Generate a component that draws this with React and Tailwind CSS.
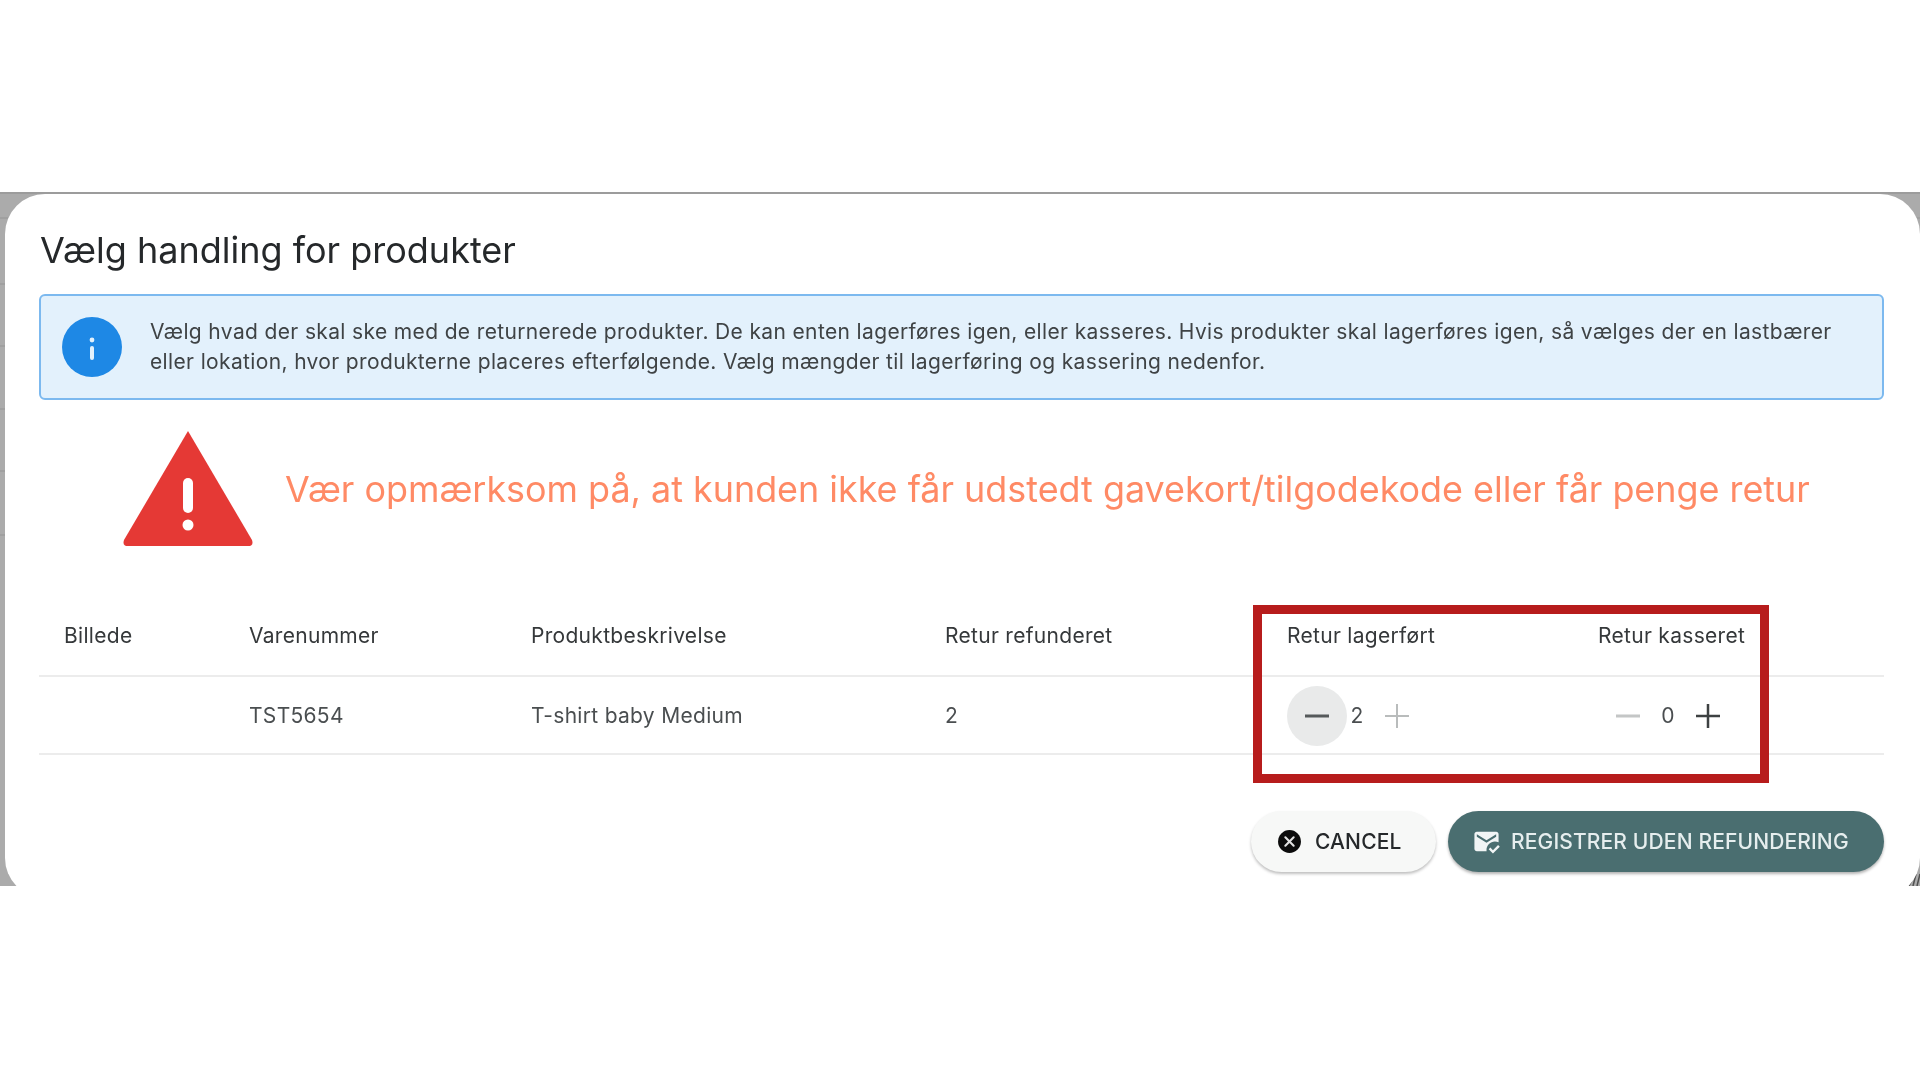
import React from 'react';

const rowGrid = 'grid grid-cols-[185px_282px_414px_342px_311px_1fr] pl-[25px] items-center';

function Stepper({ value, minusOff, plusOff, hover }) {
  return (
    <div className="flex items-center">
      <span className={`flex h-[60px] w-[60px] items-center justify-center rounded-full ${hover ? 'bg-[#e9eaea]' : ''}`}>
        <svg width="24" height="24" viewBox="0 0 24 24" className={minusOff ? 'text-[#c4c6c6]' : 'text-[#55595a]'}>
          <rect x="0" y="10.5" width="24" height="3" fill="currentColor" />
        </svg>
      </span>
      <span className="w-5 text-center">{value}</span>
      <span className="flex h-[60px] w-[60px] items-center justify-center">
        <svg width="24" height="24" viewBox="0 0 24 24" className={plusOff ? 'text-[#b9bcbc]' : 'text-[#3d4142]'}>
          <path d="M0 12h24M12 0v24" stroke="currentColor" strokeWidth={plusOff ? 2 : 2.5} fill="none" />
        </svg>
      </span>
    </div>
  );
}

export default function App() {
  return (
    <div className="min-h-[1080px] bg-white pt-[192px] font-['Inter',sans-serif] text-[#3c3f41] blur-[0.5px]">
      <div className="relative h-[694px] overflow-hidden border-t-2 border-[#9c9c9c] bg-[#ababab] pl-[5px]">
        {/* table rows of the page behind the dialog */}
        <div className="absolute inset-x-0 top-0">
          <div className="h-[25px] border-b-2 border-[#a0a0a0]" />
          <div className="h-[66px] border-b-2 border-[#a0a0a0]" />
          <div className="h-[62px] border-b-2 border-[#a0a0a0]" />
          <div className="h-[63px] border-b-2 border-[#a0a0a0]" />
          <div className="h-[62px] border-b-2 border-[#a0a0a0]" />
          <div className="h-[64px] border-b-2 border-[#a0a0a0]" />
        </div>
        <svg width="14" height="16" viewBox="0 0 14 16" className="absolute bottom-0 right-0">
          <path d="M3 16l4-8M7 16l3-12M11 16l3-12" stroke="#4f4f4f" strokeWidth="1.5" fill="none" />
        </svg>

        <div className="relative h-[704px] rounded-[40px] bg-white pt-[33px]">
          <h2 className="pl-[35px] text-[36px] leading-[46px] text-[#25282a]">Vælg handling for produkter</h2>

          <div className="ml-[34px] mr-[36px] mt-[21px] flex h-[106px] items-center rounded-[6px] border-2 border-[#7cb9ef] bg-[#e3f1fc] pl-[21px]">
            <svg width="60" height="60" viewBox="0 0 60 60" className="shrink-0">
              <circle cx="30" cy="30" r="30" fill="#1e88e5" />
              <circle cx="30" cy="23" r="2.4" fill="#e3f1fc" />
              <rect x="28" y="29" width="4" height="14" rx="2" fill="#e3f1fc" />
            </svg>
            <p className="ml-[28px] text-[21px] leading-[30px] tracking-[0.36px] text-[#3f4345]">
              Vælg hvad der skal ske med de returnerede produkter. De kan enten lagerføres igen, eller kasseres. Hvis produkter skal lagerføres igen, så vælges der en lastbærer
              <br />
              eller lokation, hvor produkterne placeres efterfølgende. Vælg mængder til lagerføring og kassering nedenfor.
            </p>
          </div>

          <div className="mt-[30px] flex items-center pl-[117px]">
            <svg width="132" height="117" viewBox="0 0 132 117" className="shrink-0">
              <path d="M66 1 L130 110 Q132 116 126 116 L6 116 Q0 116 2 110 Z" fill="#e53935" />
              <rect x="61" y="48" width="10" height="35" rx="5" fill="#fff" />
              <circle cx="66" cy="95" r="5.5" fill="#fff" />
            </svg>
            <p className="ml-[31px] text-[35.9px] leading-[46px] text-[#ff8a65]">
              Vær opmærksom på, at kunden ikke får udstedt gavekort/tilgodekode eller får penge retur
            </p>
          </div>

          <div className="ml-[34px] mr-[36px] mt-[47px] text-[21px] tracking-[0.3px]">
            <div className={`${rowGrid} h-[83px] border-b-2 border-[#ececec] pt-[3px] text-[#35383a]`}>
              <span>Billede</span>
              <span>Varenummer</span>
              <span>Produktbeskrivelse</span>
              <span>Retur refunderet</span>
              <span>Retur lagerført</span>
              <span>Retur kasseret</span>
            </div>
            <div className={`${rowGrid} h-[78px] border-b-2 border-[#ececec] pt-[1px] text-[#4a4e50]`}>
              <span />
              <span>TST5654</span>
              <span>T-shirt baby Medium</span>
              <span>2</span>
              <Stepper value={2} hover plusOff />
              <Stepper value={0} minusOff />
            </div>
          </div>

          <div className="mr-[36px] mt-[56px] flex justify-end gap-3 text-[21px] font-medium tracking-[0.14px]">
            <button className="flex h-[61px] w-[185px] items-center gap-[13px] rounded-full bg-[#f7f8f7] pl-[26px] text-[#25282a] shadow-[0_2px_3px_rgba(0,0,0,0.25)]">
              <svg width="25" height="25" viewBox="0 0 24 24">
                <circle cx="12" cy="12" r="11" fill="#0c0c0c" />
                <path d="M8 8l8 8M16 8l-8 8" stroke="#e2e2e2" strokeWidth="2" strokeLinecap="round" fill="none" />
              </svg>
              CANCEL
            </button>
            <button className="flex h-[61px] w-[436px] items-center gap-[10px] rounded-full bg-[#4a6e70] pl-[24px] text-[#e6eeee] shadow-[0_2px_3px_rgba(0,0,0,0.3)]">
              <svg width="29" height="29" viewBox="0 0 24 24" fill="#f1f5f5">
                <path d="M12 19c0-3.870 3.130-7 7-7 1.080 0 2.090.25 3 .68V6c0-1.100-.9-2-2-2H4c-1.100 0-2 .9-2 2v12c0 1.100.9 2 2 2h8.080c-.05-.33-.08-.66-.08-1zM4 6l8 5 8-5v2l-8 5-8-5V6zm13.340 16-3.540-3.540 1.410-1.410 2.120 2.120 4.240-4.240L23 16.340 17.340 22z" />
              </svg>
              REGISTRER UDEN REFUNDERING
            </button>
          </div>

          <div className="pointer-events-none absolute left-[1248px] top-[411px] h-[178px] w-[516px] border-[9px] border-[#b71c1c]" />
        </div>
      </div>
    </div>
  );
}
